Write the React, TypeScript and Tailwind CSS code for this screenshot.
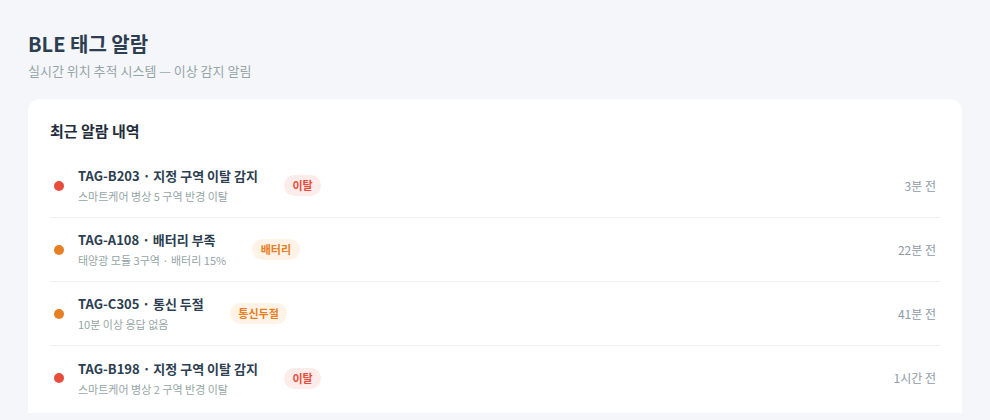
import React from 'react';

type Alarm = {
  id: string;
  title: string;
  detail: string;
  badge: string;
  level: 'danger' | 'warn';
  time: string;
};

const alarms: Alarm[] = [
  { id: 'TAG-B203', title: '지정 구역 이탈 감지', detail: '스마트케어 병상 5 구역 반경 이탈', badge: '이탈', level: 'danger', time: '3분 전' },
  { id: 'TAG-A108', title: '배터리 부족', detail: '태양광 모듈 3구역 · 배터리 15%', badge: '배터리', level: 'warn', time: '22분 전' },
  { id: 'TAG-C305', title: '통신 두절', detail: '10분 이상 응답 없음', badge: '통신두절', level: 'warn', time: '41분 전' },
  { id: 'TAG-B198', title: '지정 구역 이탈 감지', detail: '스마트케어 병상 2 구역 반경 이탈', badge: '이탈', level: 'danger', time: '1시간 전' },
];

const AlarmRow: React.FC<{ alarm: Alarm; last: boolean }> = ({ alarm, last }) => {
  const danger = alarm.level === 'danger';
  return (
    <div className={`flex items-center h-16 px-1 ${last ? '' : 'border-b border-[#eef0f3]'}`}>
      <span className={`w-2.5 h-2.5 rounded-full shrink-0 ${danger ? 'bg-[#e74c3c]' : 'bg-[#e67e22]'}`} />
      <div className="ml-3.5 flex flex-col">
        <span className="text-[13px] leading-5 font-bold text-[#2c3e50]">
          {alarm.id} · {alarm.title}
        </span>
        <span className="text-[11px] leading-[18px] text-[#95a5a6] mt-px">{alarm.detail}</span>
      </div>
      <span
        className={`ml-[26px] h-[21px] px-[8.5px] rounded-full text-[11px] font-bold flex items-center ${
          danger ? 'bg-[#fdecea] text-[#e74c3c]' : 'bg-[#fef3e6] text-[#e67e22]'
        }`}
      >
        {alarm.badge}
      </span>
      <span className="ml-auto text-[12px] text-[#8e9aa6]">{alarm.time}</span>
    </div>
  );
};

export default function App() {
  return (
    <div
      className="h-[420px] overflow-hidden bg-[#f5f6fa] px-7 pt-[29px] flex flex-col"
      style={{ fontFamily: '"Noto Sans CJK KR", "Noto Sans", sans-serif' }}
    >
      <h1 className="text-[20px] leading-[30px] font-bold text-[#2c3e50]">BLE 태그 알람</h1>
      <p className="text-[13px] leading-5 text-[#95a5a6] mt-0.5">실시간 위치 추적 시스템 — 이상 감지 알림</p>
      <div className="mt-[18px] bg-white rounded-t-xl px-[22px] pt-[20px] h-[314px] shrink-0">
        <h2 className="text-[15px] leading-6 font-bold text-[#1f2d3d]">최근 알람 내역</h2>
        <div className="mt-[11px]">
          {alarms.map((a, i) => (
            <AlarmRow key={a.id} alarm={a} last={i === alarms.length - 1} />
          ))}
        </div>
      </div>
    </div>
  );
}
